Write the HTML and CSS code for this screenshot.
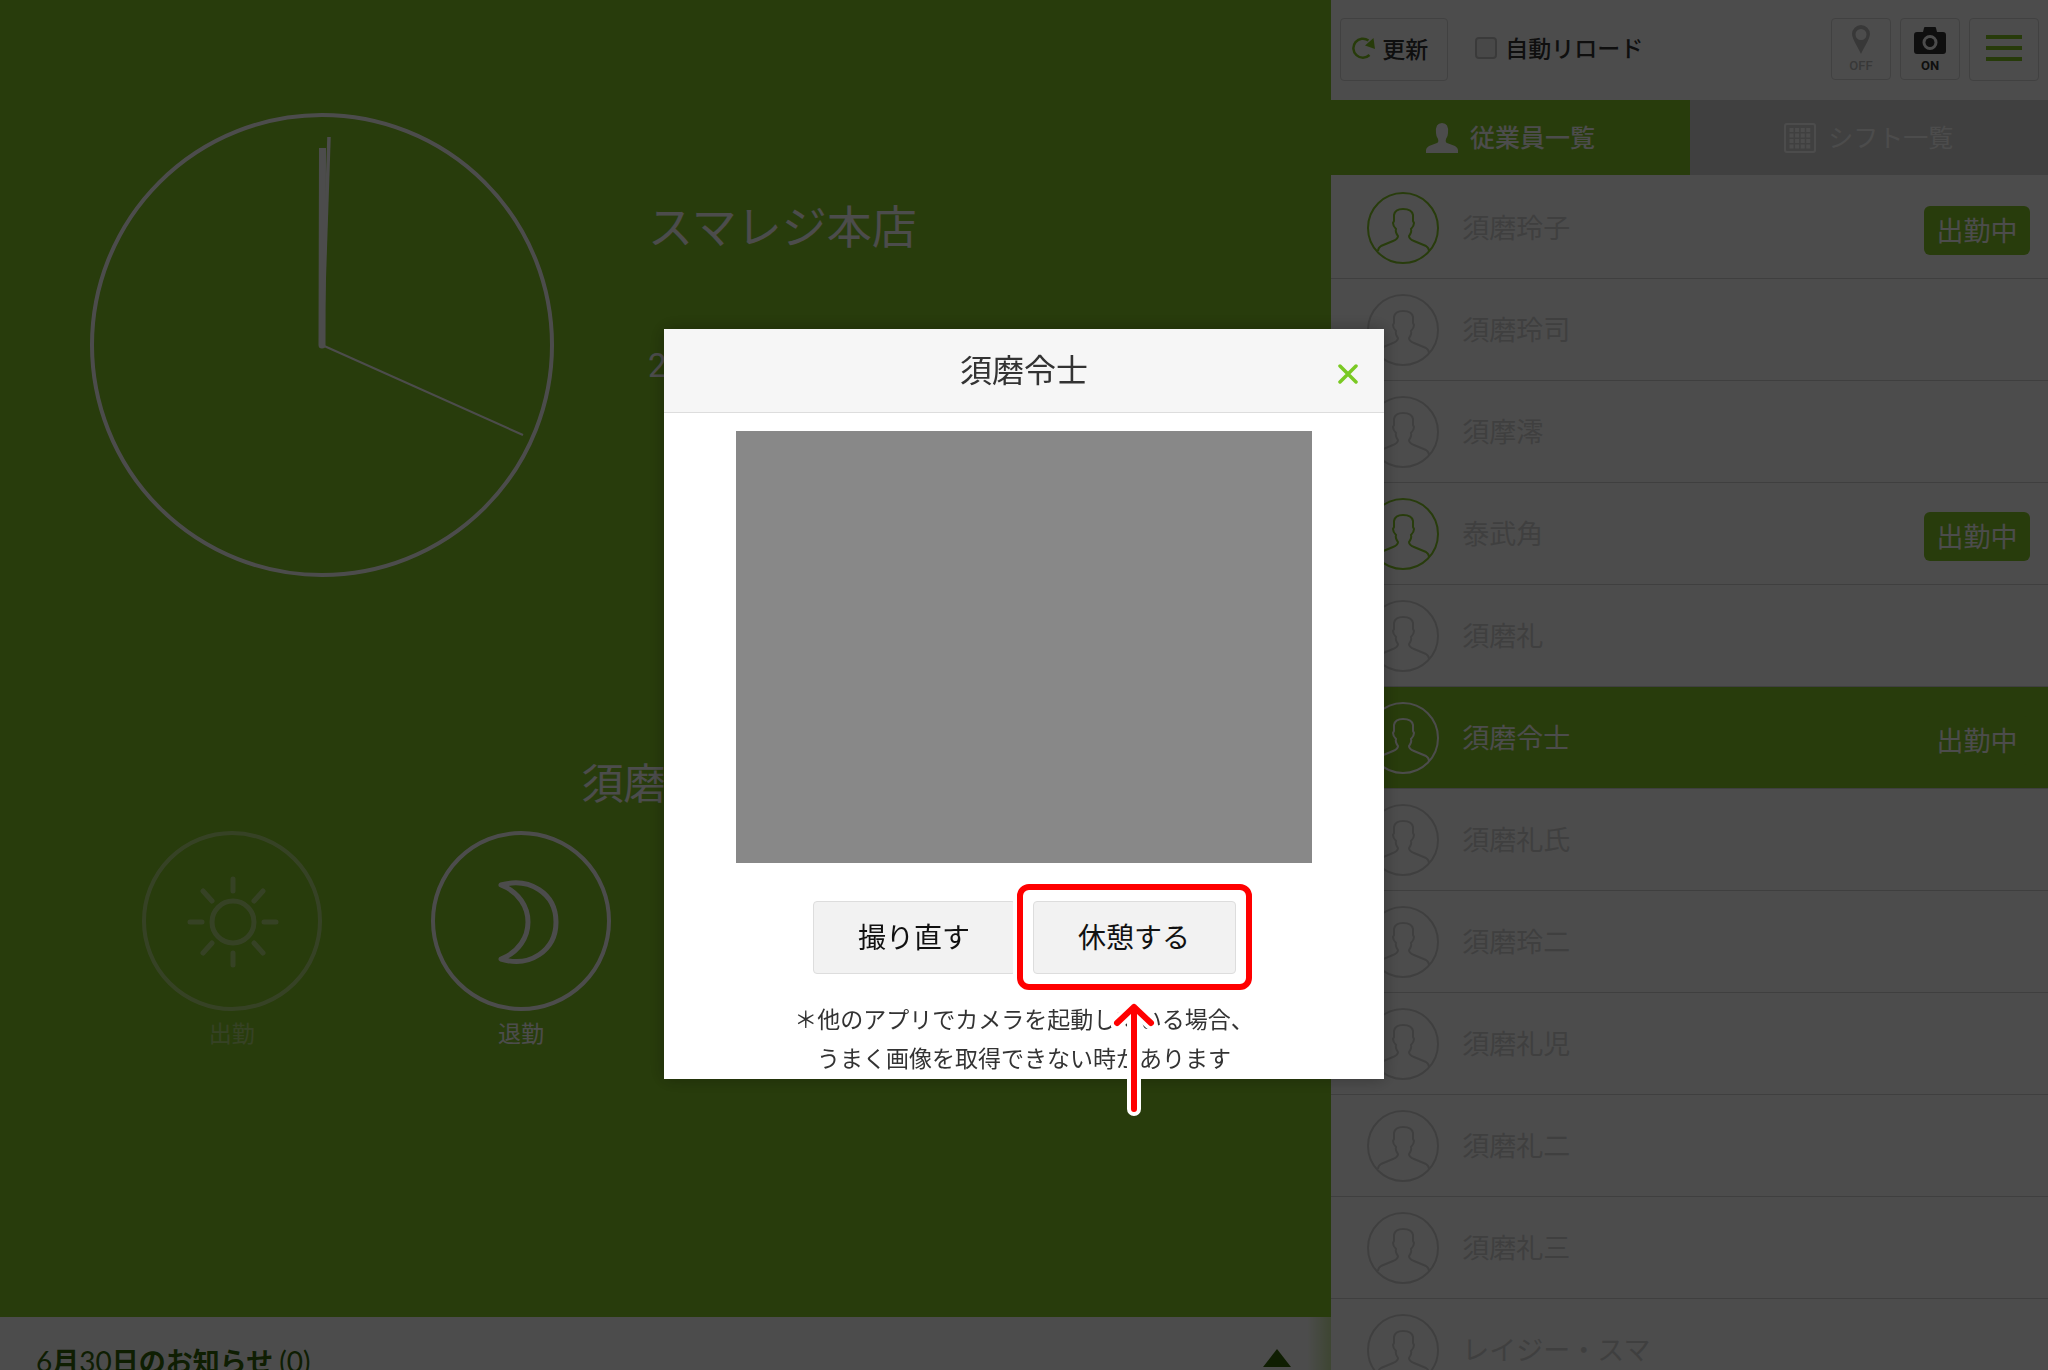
FILE: index.html
```html
<!DOCTYPE html>
<html lang="ja">
<head>
<meta charset="utf-8">
<meta name="viewport" content="width=device-width, initial-scale=1">
<title>タイムカード</title>
<link rel="stylesheet" href="styles.css">
</head>
<body>
<svg class="defs" aria-hidden="true">
  <symbol id="avatar" viewBox="0 0 72 72">
    <circle cx="36" cy="36" r="35"/>
    <path d="M11 59 Q11 56 14 54 L26 49 Q31 47 31 44 Q28 40 29 37 Q26 34 26 31 L27 29 L27 23 Q28 17 36 17 Q45 17 46 23 L46 29 L47 31 Q47 34 44 37 Q45 40 42 44 Q42 47 47 49 L59 54 Q62 56 62 59"/>
  </symbol>
</svg>
<div class="app">
  <main class="main">
    <section class="top">
      <svg class="clock" viewBox="0 0 464 464" role="img" aria-label="時計">
        <circle cx="232" cy="232" r="230" fill="none" stroke="#fff" stroke-width="4"/>
        <path d="M229 35 h7 L235.500 232 a3.500 3.500 0 0 1 -7 0 Z" fill="#fff"/>
        <path d="M232 232 L239 24" stroke="#fff" stroke-width="3.500"/>
        <path d="M232 232 L433 322" stroke="#fff" stroke-width="2"/>
      </svg>
      <div class="info">
        <h1 class="store">スマレジ本店</h1>
        <p class="date">2</p>
      </div>
    </section>
    <section class="punch">
      <h2 class="punch-name">須磨令士</h2>
      <div class="punch-grid">
        <button class="punch-button is-off" type="button" disabled>
          <svg viewBox="0 0 180 180" fill="none" stroke="#fff" stroke-width="4" stroke-linecap="round">
            <circle cx="90" cy="90" r="88"/>
            <g stroke-width="5"><circle cx="91" cy="91" r="21"/>
            <path d="M91 48v12M91 122v12M48 91h12M122 91h12M61 60l9 10M112 112l9 10M121 60l-9 10M70 112l-9 10"/></g>
          </svg>
          <span>出勤</span>
        </button>
        <button class="punch-button" type="button">
          <svg viewBox="0 0 180 180" fill="none" stroke="#fff" stroke-width="4" stroke-linejoin="round">
            <circle cx="90" cy="90" r="88"/>
            <path stroke-width="5" d="M70 54 C98 46 125 62 125 91 C125 120 98 137 70 128 C106 114 106 68 70 54 Z"/>
          </svg>
          <span>退勤</span>
        </button>
      </div>
    </section>
    <footer class="notice">
      <h2 class="notice-title"><span>6</span>月<span>30</span>日のお知らせ <span>(0)</span></h2>
      <svg class="notice-arrow" viewBox="0 0 28 18"><path d="M14 0L28 18H0Z" fill="currentColor"/></svg>
    </footer>
  </main>

  <aside class="side">
    <header class="tools">
      <button class="tool refresh" type="button">
        <svg width="24" height="24" viewBox="0 0 24 24"><path d="M17.500 19 A9.500 9.500 0 1 1 16.500 4.500" fill="none" stroke="#84c724" stroke-width="2.500"/><path d="M13 9.500L21.500 2L23 13Z" fill="#84c724"/></svg>
        <span>更新</span>
      </button>
      <label class="auto"><input type="checkbox"><span>自動リロード</span></label>
      <button class="tool toggle is-off" type="button">
        <svg width="20" height="30" viewBox="0 0 20 30"><path fill="currentColor" fill-rule="evenodd" d="M10 0a9 9 0 0 1 9 9C19 14 12 24 10 29C8 24 1 14 1 9A9 9 0 0 1 10 0Zm0 4a5.500 5.500 0 1 0 0 11a5.500 5.500 0 0 0 0-11Z"/></svg>
        <span>OFF</span>
      </button>
      <button class="tool toggle" type="button">
        <svg width="34" height="30" viewBox="0 0 34 30"><path fill="currentColor" fill-rule="evenodd" d="M12 2h10q1 0 1 1l1 4h6q3 0 3 3v16q0 3-3 3H4q-3 0-3-3V10q0-3 3-3h6l1-4q0-1 1-1ZM17 10a7.500 7.500 0 1 0 0 15a7.500 7.500 0 0 0 0-15Z"/><circle cx="17" cy="17.500" r="4.500" fill="currentColor"/></svg>
        <span>ON</span>
      </button>
      <button class="tool menu" type="button" aria-label="メニュー">
        <svg width="36" height="26" viewBox="0 0 36 26"><path d="M0 2h36M0 13h36M0 24h36" stroke="#84c724" stroke-width="4"/></svg>
      </button>
    </header>
    <nav class="tabs">
      <a class="tab is-active" href="#staff">
        <svg width="32" height="30" viewBox="0 0 32 30"><path fill="currentColor" d="M0 30v-3q0-2 3-4l8-3q2-1 1-4q-2-3-2-6Q9 0 16 0t6 10q0 3-2 6q-1 3 1 4l8 3q3 2 3 4v3Z"/></svg>
        <span>従業員一覧</span>
      </a>
      <a class="tab" href="#shift">
        <svg width="32" height="30" viewBox="0 0 32 30"><rect x="1" y="1" width="30" height="28" rx="2" fill="none" stroke="currentColor" stroke-width="2"/><path d="M5.500 7h22M5.500 12.500h22M5.500 18h22M5.500 23.500h22" stroke="currentColor" stroke-width="4" stroke-dasharray="4 1.600"/></svg>
        <span>シフト一覧</span>
      </a>
    </nav>
    <ul class="staff">
      <li class="row is-on"><svg><use href="#avatar"/></svg><span class="name">須磨玲子</span><span class="badge">出勤中</span></li>
      <li class="row"><svg><use href="#avatar"/></svg><span class="name">須磨玲司</span></li>
      <li class="row"><svg><use href="#avatar"/></svg><span class="name">須摩澪</span></li>
      <li class="row is-on"><svg><use href="#avatar"/></svg><span class="name">泰武角</span><span class="badge">出勤中</span></li>
      <li class="row"><svg><use href="#avatar"/></svg><span class="name">須磨礼</span></li>
      <li class="row is-selected"><svg><use href="#avatar"/></svg><span class="name">須磨令士</span><span class="badge">出勤中</span></li>
      <li class="row"><svg><use href="#avatar"/></svg><span class="name">須磨礼氏</span></li>
      <li class="row"><svg><use href="#avatar"/></svg><span class="name">須磨玲二</span></li>
      <li class="row"><svg><use href="#avatar"/></svg><span class="name">須磨礼児</span></li>
      <li class="row"><svg><use href="#avatar"/></svg><span class="name">須磨礼二</span></li>
      <li class="row"><svg><use href="#avatar"/></svg><span class="name">須磨礼三</span></li>
      <li class="row"><svg><use href="#avatar"/></svg><span class="name">レイジー・スマ</span></li>
    </ul>
  </aside>
</div>

<div class="overlay">
  <div class="dialog" role="dialog" aria-modal="true" aria-labelledby="dialog-title">
    <header class="dialog-head">
      <h2 id="dialog-title" class="dialog-title">須磨令士</h2>
      <button class="close" type="button" aria-label="閉じる">
        <svg width="20" height="20" viewBox="0 0 20 20"><path d="M2 2L18 18M18 2L2 18" stroke="#7ac923" stroke-width="3.500" stroke-linecap="round"/></svg>
      </button>
    </header>
    <div class="camera"></div>
    <div class="actions">
      <button class="action" type="button">撮り直す</button>
      <div class="action-wrap">
        <button class="action" type="button">休憩する</button>
        <div class="marker"></div>
        <svg class="arrow" width="46" height="120" viewBox="0 0 46 120" fill="none" stroke-linecap="round" stroke-linejoin="round">
          <path d="M23 113V11M6 27L23 11L40 27" stroke="#fff" stroke-width="14"/>
          <path d="M23 113V11M6 27L23 11L40 27" stroke="#f00" stroke-width="6"/>
        </svg>
      </div>
    </div>
    <p class="note">＊他のアプリでカメラを起動している場合、<br>うまく画像を取得できない時があります</p>
  </div>
</div>
</body>
</html>
```
FILE: styles.css
```css
* { box-sizing: border-box; }
body {
  margin: 0;
  font-family: "Noto Sans CJK JP", sans-serif;
  color: #333;
  overflow: hidden;
}
h1, h2, p, ul { margin: 0; padding: 0; font-weight: 400; }
button { font-family: inherit; color: inherit; padding: 0; }
svg { display: block; flex: none; }
.defs { position: absolute; width: 0; height: 0; }

.app { display: flex; height: 100vh; overflow: hidden; }

/* clock and punch area */
.main {
  flex: 65;
  min-width: 0;
  display: flex;
  flex-direction: column;
  background: #86c828;
  color: #fff;
}
.top { display: flex; gap: 94px; height: 704px; padding: 113px 0 0 90px; }
.clock { width: 464px; height: 464px; }
.info { padding-top: 79px; }
.store { font-size: 45px; line-height: 66px; }
.date { font-family: Roboto, sans-serif; font-size: 33px; line-height: 48px; margin-top: 84px; }
.punch { flex: 1; padding: 46px 87px 0; }
.punch-name { font-size: 42px; line-height: 62px; text-align: center; }
.punch-grid {
  display: grid;
  grid-template-columns: repeat(4, 1fr);
  margin-top: 19px;
}
.punch-button {
  display: flex;
  flex-direction: column;
  align-items: center;
  gap: 4px;
  border: 0;
  background: none;
  color: #fff;
  font-size: 23px;
  line-height: 34px;
}
.punch-button svg { width: 180px; height: 180px; }
.punch-button.is-off { opacity: .4; }
.notice {
  display: flex;
  justify-content: space-between;
  align-items: flex-start;
  height: 53px;
  padding: 28px 40px 0 36px;
  background: linear-gradient(to left, rgba(134, 200, 40, .4), rgba(134, 200, 40, 0) 24px) #fff;
  color: #336407;
  overflow: hidden;
}
.notice-title { font-size: 27px; line-height: 32px; font-weight: 700; white-space: nowrap; }
.notice-title span { font-family: Lato, sans-serif; font-size: 28px; font-weight: 400; }
.notice-arrow { width: 28px; height: 18px; margin-top: 4px; }

/* staff list */
.side { flex: 35; min-width: 0; background: #fff; }
.tools { display: flex; align-items: flex-start; height: 100px; padding: 18px 9px 0; }
.tool {
  display: flex;
  align-items: center;
  justify-content: center;
  height: 63px;
  border: 1px solid #d9d9d9;
  border-radius: 4px;
  background: none;
  color: #333;
}
.refresh { width: 108px; padding: 0 8px 3px 0; gap: 6px; font-size: 23px; line-height: 34px; font-weight: 500; }
.auto { display: flex; align-items: center; gap: 8px; margin: 13px auto 0 27px; font-size: 23px; line-height: 32px; font-weight: 500; }
.auto input {
  appearance: none;
  width: 22px;
  height: 22px;
  margin: 2px 0 0;
  border: 2px solid #c4c4c4;
  border-radius: 4px;
  background: #f2f2f0;
}
.toggle {
  flex-direction: column;
  gap: 4px;
  width: 60px;
  height: 62px;
  margin-right: 9px;
  font-family: Roboto, sans-serif;
  font-size: 13px;
  line-height: 14px;
  font-weight: 700;
}
.toggle.is-off { color: #bcbcbc; font-weight: 500; }
.menu { width: 70px; padding-bottom: 4px; }
.tabs { display: grid; grid-template-columns: 1fr 1fr; height: 75px; }
.tab {
  display: flex;
  align-items: center;
  justify-content: center;
  gap: 12px;
  background: #d6d6d6;
  color: #fff;
  font-size: 25px;
  line-height: 36px;
  text-decoration: none;
}
.tab span { padding-bottom: 4px; }
.tab.is-active { background: #86c828; font-weight: 500; }
.staff { list-style: none; padding-top: 2px; }
.row {
  display: flex;
  align-items: center;
  height: 102px;
  padding: 0 18px 0 36px;
  border-bottom: 1px solid #d4d4d4;
  color: #d4d4d4;
}
.row svg { width: 72px; height: 72px; fill: none; stroke: currentColor; stroke-width: 2; }
.row.is-on svg { color: #86c828; }
.row.is-selected { background: #86c828; color: #fff; }
.name { margin-left: 23px; padding-bottom: 2px; font-size: 27px; line-height: 40px; }
.badge {
  width: 106px;
  height: 49px;
  margin: 5px 0 0 auto;
  border-radius: 6px;
  background: #86c828;
  color: #fff;
  font-size: 27px;
  line-height: 48px;
  text-align: center;
}

/* camera dialog */
.overlay {
  position: fixed;
  inset: 0;
  display: flex;
  align-items: flex-start;
  justify-content: center;
  padding-top: 329px;
  background: rgba(0, 0, 0, .7);
}
.dialog { width: 720px; background: #fff; box-shadow: 0 0 16px rgba(0, 0, 0, .3); }
.dialog-head {
  display: grid;
  grid-template-columns: 1fr auto 1fr;
  align-items: center;
  height: 84px;
  padding: 0 26px;
  border-bottom: 1px solid #ddd;
  background: #f6f6f6;
}
.dialog-title { grid-column: 2; padding-bottom: 5px; font-size: 32px; line-height: 48px; }
.close { justify-self: end; margin-top: 6px; border: 0; background: none; }
.camera { height: 432px; margin: 18px 72px 0; background: #888; }
.actions { display: flex; justify-content: center; gap: 17px; margin-top: 38px; }
.action-wrap { position: relative; }
.action {
  display: block;
  width: 203px;
  height: 73px;
  padding-bottom: 3px;
  border: 1px solid #ddd;
  border-radius: 4px;
  background: #f2f2f2;
  color: #111;
  font-size: 28px;
  line-height: 40px;
}
.marker {
  position: absolute;
  inset: -17px -16px -16px;
  border: 6px solid #f00;
  border-radius: 12px;
  box-shadow: 0 0 0 4px #fff;
  pointer-events: none;
}
.arrow { position: absolute; left: 78px; top: 95px; }
.note { padding-bottom: 2px; margin-top: 25px; font-size: 23px; line-height: 39px; text-align: center; }
```
